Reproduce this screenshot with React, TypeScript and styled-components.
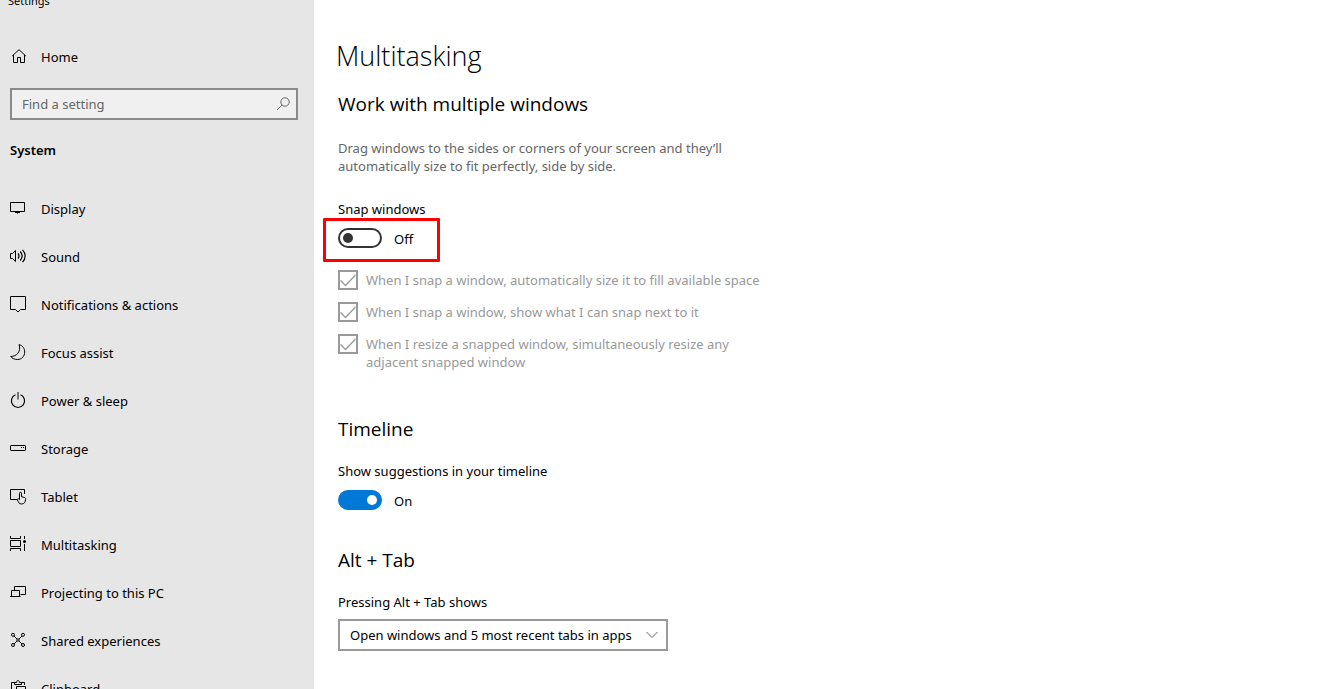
import React from "react";
import styled, { createGlobalStyle } from "styled-components";

const GlobalStyle = createGlobalStyle`
  *, *::before, *::after { box-sizing: border-box; }
  body {
    margin: 0;
    background: #fff;
    color: #000;
    font: 13px/18px "Noto Sans", "Open Sans", sans-serif;
  }
  input, select { font: inherit; color: inherit; margin: 0; }
`;

const Page = styled.div`
  display: flex;
  height: 100vh;
  overflow: hidden;
`;

const Sidebar = styled.aside`
  flex: 0 0 314px;
  background: #e6e6e6;
`;

const WindowTitle = styled.div`
  margin: -9px 0 22px 8px;
  font-size: 11px;
  line-height: 20px;
`;

const NavLink = styled.a`
  display: flex;
  align-items: center;
  gap: 14px;
  height: 48px;
  padding-left: 9px;
  color: inherit;
  text-decoration: none;
`;

const Icon = styled.svg`
  flex: none;
  width: 18px;
  height: 18px;
  fill: none;
  stroke: #000;
  stroke-width: 1;
`;

const SearchBox = styled.label`
  display: flex;
  align-items: center;
  height: 32px;
  margin: 7px 16px 20px 10px;
  padding: 0 4px 0 10px;
  border: 2px solid #8a8a8a;
  background: #f0f0f0;

  svg { stroke: #6a6a6a; }
`;

const SearchInput = styled.input`
  flex: 1;
  min-width: 0;
  padding: 0;
  border: 0;
  outline: 0;
  background: none;

  &::placeholder { color: #666; opacity: 1; }
`;

const GroupTitle = styled.h2`
  margin: 0 0 25px 10px;
  font-size: 13px;
  font-weight: 600;
  line-height: 20px;
`;

const List = styled.ul`
  margin: 0;
  padding: 0;
  list-style: none;
`;

const Main = styled.main`
  flex: 1;
  min-width: 0;
  padding: 38px 24px 0;
`;

const Title = styled.h1`
  margin: 0 0 16px -2px;
  font-family: "Open Sans", "Noto Sans", sans-serif;
  font-size: 27px;
  font-weight: 300;
  line-height: 36px;
`;

const Section = styled.section<{ $gap?: number }>`
  margin-bottom: ${(p) => p.$gap ?? 0}px;
`;

const Heading = styled.h2<{ $gap: number }>`
  margin: 0 0 ${(p) => p.$gap}px;
  font-family: "Open Sans", "Noto Sans", sans-serif;
  font-size: 19px;
  font-weight: 400;
  line-height: 28px;
`;

const Description = styled.p`
  max-width: 400px;
  margin: 0 0 25px;
  color: #666;
`;

const FieldLabel = styled.label<{ $gap: number }>`
  display: block;
  width: fit-content;
  margin-bottom: ${(p) => p.$gap}px;
`;

const ToggleRow = styled.div`
  position: relative;
  display: flex;
  align-items: center;
  gap: 12px;
  width: fit-content;
  height: 20px;

  span { padding-top: 2px; }
`;

const Switch = styled.input`
  appearance: none;
  display: flex;
  align-items: center;
  width: 44px;
  height: 20px;
  padding: 0 3px;
  border: 2px solid #333;
  border-radius: 10px;

  &::before {
    content: "";
    width: 10px;
    height: 10px;
    border-radius: 50%;
    background: #333;
  }
  &:checked {
    justify-content: flex-end;
    border-color: #0078d7;
    background: #0078d7;
  }
  &:checked::before { background: #fff; }
`;

const Highlight = styled.div`
  position: absolute;
  top: -10px;
  left: -15px;
  width: 117px;
  height: 44px;
  border: 3px solid #f00;
  border-radius: 1px;
  pointer-events: none;
`;

const Options = styled.div`
  display: flex;
  flex-direction: column;
  gap: 12px;
  margin-top: 22px;
`;

const Option = styled.label`
  display: grid;
  grid-template-columns: 20px auto;
  column-gap: 8px;
  justify-content: start;
  align-items: start;
  max-width: 430px;
  color: #999;

  & > input, & > svg { grid-area: 1 / 1; }
  & > span { padding-top: 1px; }
`;

const Check = styled.input`
  appearance: none;
  width: 20px;
  height: 20px;
  border: 2px solid #999;
`;

const CheckMark = styled.svg`
  width: 20px;
  height: 20px;
  fill: none;
  stroke: #999;
  stroke-width: 1.3;
  pointer-events: none;
`;

const SelectBox = styled.div`
  display: grid;
  width: 330px;

  & > * { grid-area: 1 / 1; }
`;

const Select = styled.select`
  appearance: none;
  width: 100%;
  min-width: 0;
  height: 32px;
  padding: 0 20px 0 10px;
  border: 2px solid #999;
  border-radius: 0;
  background: #fff;
`;

const Chevron = styled.svg`
  align-self: center;
  justify-self: end;
  width: 12px;
  height: 8px;
  margin-right: 10px;
  fill: none;
  stroke: #666;
  pointer-events: none;
`;

const items: { name: string; icon: React.ReactNode }[] = [
  {
    name: "Display",
    icon: <path d="M1.5 2.5h14v9h-14zM8.5 11.5v2M6 12.5h5" />,
  },
  {
    name: "Sound",
    icon: (
      <>
        <path d="M1.5 5.5h2l3-3v11l-3-3h-2z" />
        <path d="M9 5.5c1.3 1.6 1.3 3.4 0 5M11.2 3.5c2.4 2.8 2.4 6.2 0 9M13.5 1.8c3.5 3.6 3.5 8.8 0 12.4" strokeWidth="1.2" />
      </>
    ),
  },
  {
    name: "Notifications & actions",
    icon: <path d="M1.5 .5h15v13h-5l-2.5 2.5-2.5-2.5h-5z" />,
  },
  {
    name: "Focus assist",
    icon: <path d="M10 .6C14 1.6 15.7 4.8 15.7 8c0 4.3-3.2 7.5-7 7.5-3 0-5.5-1-7-3C7.5 12.5 12.5 7.5 10 .6z" />,
  },
  {
    name: "Power & sleep",
    icon: (
      <>
        <path d="M6.5 2.8a6.6 6.6 0 1 0 5 0" strokeWidth="1.2" />
        <path d="M9 0v7.5" stroke="#777" strokeWidth="2" />
      </>
    ),
  },
  {
    name: "Storage",
    icon: (
      <>
        <rect x="1.5" y="5.5" width="15" height="5" rx=".6" />
        <path d="M12 7.5h1M14 7.5h1" />
      </>
    ),
  },
  {
    name: "Tablet",
    icon: (
      <>
        <path d="M8 11.5H1.5v-10h14V6" />
        <path d="M10.5 11.5V5.3c0-1.4 2-1.4 2 0v3.4l3 .8c1 .3 1.2.8 1.100 1.800-.2 2.700-1.300 4.700-4 4.700-2.400 0-3.200-1.500-4.200-4.200-.3-1 .8-1.500 1.400-.8z" />
      </>
    ),
  },
  {
    name: "Multitasking",
    icon: (
      <>
        <path d="M1.5 0v2.5h10V0M1.5 4.5h10v6h-10zM1.5 15v-2.5h10V15M15.5 0v3M15.5 8v7" />
        <circle cx="15.5" cy="5.5" r="1.5" fill="#000" stroke="none" />
      </>
    ),
  },
  {
    name: "Projecting to this PC",
    icon: <path d="M5.5 6V2.5h11v8h-5M2.5 12.5v-6h8v6M1 12.5h10.5" />,
  },
  {
    name: "Shared experiences",
    icon: (
      <>
        <circle cx="4" cy="2.8" r="1.5" />
        <circle cx="14" cy="2.8" r="1.5" />
        <circle cx="4" cy="13" r="1.5" />
        <circle cx="14" cy="13" r="1.5" />
        <circle cx="9" cy="8" r="1.2" />
        <path d="M5 4l3 3M13 4l-3 3M5 12l3-3M13 12l-3-3" />
      </>
    ),
  },
  {
    name: "Clipboard",
    icon: <path d="M6 2.5H2.5v14H7M12 2.5h3.5V5M5.5 4.5V2.5H7.5c0-2.600 3-2.600 3 0h2v2zM7.5 6.5h9v10h-9z" />,
  },
];

const options = [
  "When I snap a window, automatically size it to fill available space",
  "When I snap a window, show what I can snap next to it",
  "When I resize a snapped window, simultaneously resize any adjacent snapped window",
];

export default function App() {
  return (
    <Page>
      <GlobalStyle />
      <Sidebar>
        <WindowTitle>Settings</WindowTitle>
        <NavLink href="#home">
          <Icon viewBox="0 0 18 18" aria-hidden="true">
            <path d="M3.2 8L10 1.7 16.8 8M4.5 7v7.5h4v-5h3v5h4V7" />
          </Icon>
          Home
        </NavLink>
        <SearchBox>
          <SearchInput type="text" placeholder="Find a setting" aria-label="Find a setting" />
          <Icon viewBox="0 0 18 18" aria-hidden="true">
            <circle cx="11" cy="7" r="4.2" />
            <path d="M8 10l-5 5" />
          </Icon>
        </SearchBox>
        <GroupTitle>System</GroupTitle>
        <nav aria-label="System">
          <List>
            {items.map((item) => (
              <li key={item.name}>
                <NavLink href="#">
                  <Icon viewBox="0 0 18 18" aria-hidden="true">{item.icon}</Icon>
                  {item.name}
                </NavLink>
              </li>
            ))}
          </List>
        </nav>
      </Sidebar>
      <Main>
        <Title>Multitasking</Title>
        <Section $gap={44}>
          <Heading $gap={21}>Work with multiple windows</Heading>
          <Description>
            Drag windows to the sides or corners of your screen and they’ll automatically size to fit
            perfectly, side by side.
          </Description>
          <FieldLabel htmlFor="snap" $gap={10}>Snap windows</FieldLabel>
          <ToggleRow>
            <Switch id="snap" type="checkbox" role="switch" />
            <span>Off</span>
            <Highlight />
          </ToggleRow>
          <Options>
            {options.map((text) => (
              <Option key={text}>
                <Check type="checkbox" defaultChecked disabled />
                <CheckMark viewBox="0 0 20 20" aria-hidden="true">
                  <path d="M2.5 10.5l5 5L17.5 5" />
                </CheckMark>
                <span>{text}</span>
              </Option>
            ))}
          </Options>
        </Section>
        <Section $gap={36}>
          <Heading $gap={19}>Timeline</Heading>
          <FieldLabel htmlFor="timeline" $gap={10}>Show suggestions in your timeline</FieldLabel>
          <ToggleRow>
            <Switch id="timeline" type="checkbox" role="switch" defaultChecked />
            <span>On</span>
          </ToggleRow>
        </Section>
        <Section>
          <Heading $gap={19}>Alt + Tab</Heading>
          <FieldLabel htmlFor="alt-tab" $gap={8}>Pressing Alt + Tab shows</FieldLabel>
          <SelectBox>
            <Select id="alt-tab">
              <option>Open windows and 5 most recent tabs in apps</option>
            </Select>
            <Chevron viewBox="0 0 12 8" aria-hidden="true">
              <path d="M.5 1l5.500 5.500L11.500 1" />
            </Chevron>
          </SelectBox>
        </Section>
      </Main>
    </Page>
  );
}
